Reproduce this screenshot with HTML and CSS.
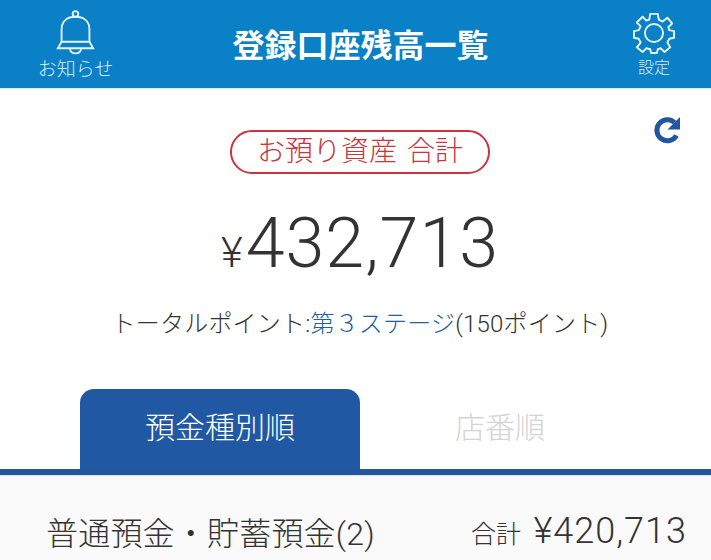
FILE: index.html
```html
<!DOCTYPE html>
<html lang="ja">

<head>
  <title>登録口座残高一覧</title>
  <meta name="viewport" content="width=device-width, initial-scale=1">
  <link rel="stylesheet" href="styles.css">
</head>

<body>
  <div id="app">

    <!-- Header -->
    <div class="header">
      <div class="header-btn notice">
        <svg width="39" height="47" viewBox="0 0 42 48" fill="none" stroke="#e6f4fb" stroke-width="2">
          <circle cx="21" cy="4" r="3" />
          <path d="M6 34 V21 C6 11 13 7 21 7 C29 7 36 11 36 21 V34" />
          <path d="M6 34 L2 41 H40 L36 34 Z" />
          <path d="M15 42 C16 48 26 48 27 42" />
        </svg>
        <span>お知らせ</span>
      </div>
      <h1>登録口座残高一覧</h1>
      <div class="header-btn settings">
        <svg width="42" height="42" viewBox="0 0 44 44" fill="none" stroke="#e6f4fb" stroke-width="2" stroke-linejoin="round">
          <circle cx="22" cy="22" r="9.5" />
          <path d="M18 2 H26 L27 8 L31 10 L36 6 L41 12 L37 16 L38 19 L43 20 V27 L38 28 L36 32 L39 37 L33 42 L29 38 L26 39 L25 43 H19 L18 39 L14 38 L10 42 L4 37 L8 32 L6 28 L1 27 V20 L6 19 L8 15 L4 11 L10 5 L14 9 L17 8 Z" />
        </svg>
        <span>設定</span>
      </div>
    </div>

    <!-- Total -->
    <div class="summary">
      <svg class="refresh" width="30" height="30" viewBox="0 0 30 30">
        <path d="M24.5 20.5 A10.5 10.5 0 1 1 22.5 7.5" fill="none" stroke="#22569f" stroke-width="5" />
        <path d="M28 2 V14.5 H15.5 Z" fill="#22569f" />
      </svg>
      <div class="pill">お預り資産 合計</div>
      <div class="total"><span class="yen">¥</span>432,713</div>
      <p class="points">トータルポイント:<span class="stage">第３ステージ</span>(150ポイント)</p>
    </div>

    <!-- Tabs -->
    <div class="tabs">
      <div class="tab active">預金種別順</div>
      <div class="tab">店番順</div>
    </div>

    <!-- Account row -->
    <div class="account">
      <span class="account-name">普通預金・貯蓄預金(2)</span>
      <span class="account-sum"><small>合計</small> ¥420,713</span>
    </div>

  </div>
</body>

</html>
```

FILE: styles.css
```css
* {
  box-sizing: border-box;
  margin: 0;
  padding: 0;
  font-family: Roboto, 'Noto Sans CJK JP', sans-serif;
}

html,
body {
  height: 560px;
  overflow: hidden;
  background: white;
}

#app {
  width: 711px;
  height: 560px;
  overflow: hidden;
}

.header {
  display: flex;
  justify-content: space-between;
  align-items: flex-start;
  height: 89px;
  padding: 9px 36px 0 37px;
  background-color: #0a80c6;
  border-bottom: 1px solid #d8eef9;
}

.header-btn {
  display: flex;
  flex-direction: column;
  align-items: center;
  color: #d6ecf7;
  font-weight: 300;
}

.notice {
  width: 77px;
}

.notice span {
  font-size: 19px;
  line-height: 24px;
  margin-top: 2px;
  white-space: nowrap;
}

.settings {
  padding-top: 3px;
  width: 42px;
}

.settings span {
  font-size: 16px;
  line-height: 22px;
  margin-top: 3px;
  white-space: nowrap;
}

h1 {
  flex: 1;
  text-align: center;
  color: white;
  font-size: 32px;
  font-weight: bold;
  line-height: 40px;
  margin-top: 17px;
  margin-right: 24px;
  margin-left: -2px;
}

.summary {
  position: relative;
  display: flex;
  flex-direction: column;
  align-items: center;
  height: 300px;
  padding: 41px 0 0 9px;
}

.refresh {
  position: absolute;
  top: 26px;
  right: 29px;
}

.pill {
  width: 260px;
  height: 44px;
  border: 2px solid #c8343f;
  border-radius: 22px;
  color: #c8343f;
  font-size: 28px;
  font-weight: 300;
  line-height: 39px;
  text-align: center;
  word-spacing: 3px;
}

.total {
  margin-top: 29px;
  color: #333;
  font-size: 70px;
  font-weight: 300;
  line-height: 80px;
  letter-spacing: 1px;
}

.yen {
  font-size: 42px;
  margin-right: 2px;
}

.points {
  margin-top: 15px;
  color: #333;
  font-size: 24px;
  font-weight: 300;
  line-height: 32px;
  letter-spacing: 0.2px;
}

.stage {
  color: #22609f;
}

.tabs {
  display: flex;
  height: 86px;
  padding-left: 80px;
  border-bottom: 6px solid #22569f;
}

.tab {
  width: 280px;
  height: 80px;
  border-radius: 14px 14px 0 0;
  color: #d4d4d4;
  font-size: 30px;
  font-weight: 300;
  line-height: 78px;
  text-align: center;
}

.tab.active {
  background-color: #2158a4;
  color: white;
}

.account {
  display: flex;
  justify-content: space-between;
  align-items: center;
  height: 85px;
  padding: 26px 24px 0 46px;
  background-color: #fafafa;
  color: #333;
  font-size: 32px;
  font-weight: 300;
  letter-spacing: 0.2px;
  border-top: 1px solid #dbe6f3;
}

.account-sum {
  font-size: 36px;
  letter-spacing: 1px;
}

.account small {
  font-size: 25px;
  font-weight: 300;
  letter-spacing: 0;
  margin-right: 3px;
}
```
